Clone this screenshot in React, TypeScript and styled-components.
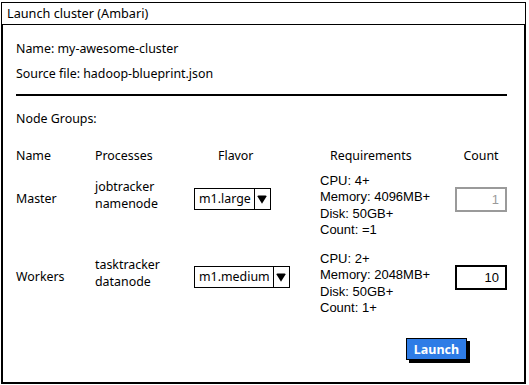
import React from "react";
import styled, { createGlobalStyle } from "styled-components";

const Global = createGlobalStyle`
  html, body { margin: 0; padding: 0; background: #fff; }
  body { font-family: "Noto Sans", "Open Sans", sans-serif; color: #000; }
`;

const COLS = "79px 99px 126px 135px 52px";
const SKETCH_SIZE = "12.4px";

const Window = styled.div`
  margin: 2px 0 0 1px;
  width: 525px;
  display: flex;
  flex-direction: column;
`;

const TitleBar = styled.div`
  height: 21px;
  border: 1px solid #000;
  box-sizing: content-box;
  padding-left: 5px;
  font-size: 12.7px;
  line-height: 21px;
  white-space: nowrap;
`;

const Body = styled.div`
  border-left: 2px solid #000;
  border-right: 2px solid #000;
  border-bottom: 2px solid #000;
  padding: 16px 0 0 13px;
  box-sizing: border-box;
  height: 359px;
  display: flex;
  flex-direction: column;
`;

const Content = styled.div`
  width: 491px;
  display: flex;
  flex-direction: column;
`;

const InfoLine = styled.div<{ $gap?: number }>`
  font-size: ${SKETCH_SIZE};
  line-height: 16px;
  height: 16px;
  white-space: nowrap;
  margin-top: ${(p) => p.$gap ?? 0}px;
`;

const Rule = styled.hr`
  margin: 12px 0 0 0;
  border: none;
  height: 2px;
  background: #000;
  width: 491px;
`;

const Table = styled.div`
  margin-top: 21px;
  display: flex;
  flex-direction: column;
`;

const HeaderRow = styled.div`
  display: grid;
  grid-template-columns: ${COLS};
  font-size: ${SKETCH_SIZE};
  line-height: 16px;
  height: 16px;
`;

const HeadCell = styled.div<{ $indent?: number; $center?: boolean }>`
  padding-left: ${(p) => p.$indent ?? 0}px;
  text-align: ${(p) => (p.$center ? "center" : "left")};
  white-space: nowrap;
`;

const Row = styled.div<{ $gap: number }>`
  display: grid;
  grid-template-columns: ${COLS};
  align-items: start;
  margin-top: ${(p) => p.$gap}px;
  font-size: ${SKETCH_SIZE};
`;

const NameCell = styled.div`
  margin-top: 18px;
  line-height: 16px;
`;

const ProcCell = styled.div`
  margin-top: 5px;
  line-height: 17px;
`;

const Select = styled.div`
  margin-top: 15px;
  justify-self: start;
  height: 22px;
  box-sizing: border-box;
  border: 1.5px solid #000;
  display: flex;
  align-items: stretch;
`;

const SelectValue = styled.div`
  padding: 0 3px 0 4px;
  line-height: 19px;
  font-size: ${SKETCH_SIZE};
  white-space: nowrap;
`;

const SelectArrow = styled.div`
  width: 15px;
  border-left: 1.5px solid #000;
  display: flex;
  align-items: center;
  justify-content: center;
`;

const Req = styled.div`
  font-family: "Liberation Sans", Arial, sans-serif;
  font-size: 13px;
  line-height: 16.3px;
  white-space: nowrap;
`;

const CountBox = styled.div<{ $disabled?: boolean }>`
  margin-top: 14px;
  height: 25px;
  box-sizing: border-box;
  border: 2px solid ${(p) => (p.$disabled ? "#9a9a9a" : "#000")};
  text-align: right;
  padding-right: 6px;
  line-height: 21px;
  font-family: "Liberation Sans", Arial, sans-serif;
  font-size: 13px;
  color: ${(p) => (p.$disabled ? "#9a9a9a" : "#000")};
`;

const Footer = styled.div`
  margin-top: 22px;
  display: flex;
  justify-content: flex-end;
  padding-right: 40px;
`;

const LaunchButton = styled.button`
  width: 61px;
  height: 22px;
  background: #2e7ce6;
  border: 1px solid #000;
  box-shadow: 3px 3px 0 #000;
  color: #fff;
  font-family: "Noto Sans", sans-serif;
  font-weight: bold;
  font-size: 12.5px;
  padding: 0;
  cursor: pointer;
`;

const Arrow = () => (
  <svg width="10" height="9" viewBox="0 0 10 9">
    <path d="M0.5 1.5 Q0.5 0.5 1.5 0.5 L8.5 0.5 Q9.5 0.5 9.5 1.5 L5 8.8 Z" fill="#000" />
  </svg>
);

type Group = {
  name: string;
  procs: string[];
  flavor: string;
  req: string[];
  count: string;
  disabled?: boolean;
  gap: number;
};

const groups: Group[] = [
  {
    name: "Master",
    procs: ["jobtracker", "namenode"],
    flavor: "m1.large",
    req: ["CPU: 4+", "Memory: 4096MB+", "Disk: 50GB+", "Count: =1"],
    count: "1",
    disabled: true,
    gap: 9,
  },
  {
    name: "Workers",
    procs: ["tasktracker", "datanode"],
    flavor: "m1.medium",
    req: ["CPU: 2+", "Memory: 2048MB+", "Disk: 50GB+", "Count: 1+"],
    count: "10",
    gap: 13,
  },
];

export default function App() {
  return (
    <>
      <Global />
      <Window>
        <TitleBar>Launch cluster (Ambari)</TitleBar>
        <Body>
          <Content>
            <InfoLine>Name: my-awesome-cluster</InfoLine>
            <InfoLine $gap={9}>Source file: hadoop-blueprint.json</InfoLine>
            <Rule />
            <InfoLine $gap={15}>Node Groups:</InfoLine>
            <Table>
              <HeaderRow>
                <HeadCell>Name</HeadCell>
                <HeadCell>Processes</HeadCell>
                <HeadCell $indent={24}>Flavor</HeadCell>
                <HeadCell $indent={10}>Requirements</HeadCell>
                <HeadCell $center>Count</HeadCell>
              </HeaderRow>
              {groups.map((g) => (
                <Row key={g.name} $gap={g.gap}>
                  <NameCell>{g.name}</NameCell>
                  <ProcCell>
                    {g.procs.map((p) => (
                      <div key={p}>{p}</div>
                    ))}
                  </ProcCell>
                  <Select>
                    <SelectValue>{g.flavor}</SelectValue>
                    <SelectArrow>
                      <Arrow />
                    </SelectArrow>
                  </Select>
                  <Req>
                    {g.req.map((r) => (
                      <div key={r}>{r}</div>
                    ))}
                  </Req>
                  <CountBox $disabled={g.disabled}>{g.count}</CountBox>
                </Row>
              ))}
            </Table>
            <Footer>
              <LaunchButton>Launch</LaunchButton>
            </Footer>
          </Content>
        </Body>
      </Window>
    </>
  );
}
